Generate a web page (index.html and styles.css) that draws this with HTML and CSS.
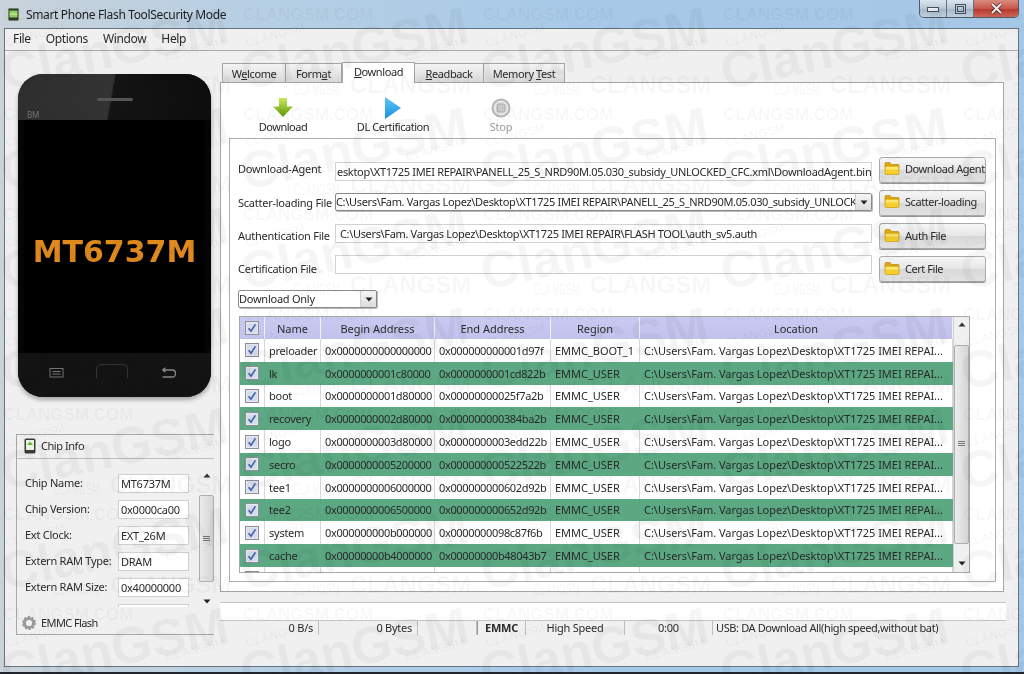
FILE: index.html
```html
<!DOCTYPE html>
<html lang="en">
<head>
<meta charset="utf-8">
<title>Smart Phone Flash Tool</title>
<link rel="stylesheet" href="styles.css">
</head>
<body>
<svg width="0" height="0" class="defs" aria-hidden="true">
  <defs>
    <symbol id="folder" viewBox="0 0 16 16">
      <path d="M1 3.5 Q1 2.5 2 2.5H6L7.5 4.5H14Q15 4.5 15 5.5V7H1Z" fill="#e0a810" stroke="#b98a10" stroke-width=".7"/>
      <rect x="1" y="6" width="14" height="8.5" rx="1" fill="#f7cf2c" stroke="#c69a12" stroke-width=".7"/>
      <rect x="2" y="7" width="12" height="2.5" fill="#fde774"/>
    </symbol>
    <symbol id="check" viewBox="0 0 14 14">
      <rect x=".5" y=".5" width="13" height="13" fill="#e6e9f2" stroke="#8e8f96"/>
      <rect x="2" y="2" width="10" height="10" fill="#d6dcec"/>
      <path d="M3.6 7.2 6 10.2 10.4 3.4" fill="none" stroke="#3d5fa8" stroke-width="1.6"/>
    </symbol>
    <symbol id="uparrow" viewBox="0 0 8 5"><path d="M4 .5 7.5 4.5H.5Z" fill="#333"/></symbol>
    <symbol id="downarrow" viewBox="0 0 8 5"><path d="M4 4.5 7.5 .5H.5Z" fill="#222"/></symbol>
  </defs>
</svg>

<div class="window">
  <header class="titlebar">
    <svg class="appicon" viewBox="0 0 11 13" width="11" height="13"><rect x=".5" y=".5" width="10" height="12" rx="1" fill="#2f3a2c" stroke="#77806f"/><rect x="1.5" y="2.5" width="8" height="7" fill="#8ccf5c"/><rect x="1.5" y="5.5" width="8" height="1" fill="#d6efb0"/></svg>
    <span class="apptitle">Smart Phone Flash ToolSecurity Mode</span>
    <div class="winbtns">
      <span class="winbtn"><svg viewBox="0 0 12 6" width="12" height="6"><rect x=".5" y="1.5" width="11" height="4" fill="#e8eef4" stroke="#44505c"/></svg></span>
      <span class="winbtn"><svg viewBox="0 0 11 10" width="11" height="10"><rect x=".5" y=".5" width="10" height="9" fill="none" stroke="#44505c"/><rect x="2.5" y="2.5" width="6" height="5" fill="none" stroke="#44505c"/></svg></span>
      <span class="winbtn winclose"><svg viewBox="0 0 13 11" width="13" height="11"><path d="M2 1 11 10M11 1 2 10" stroke="#3b2a2a" stroke-width="3.4"/><path d="M2 1 11 10M11 1 2 10" stroke="#f6eeee" stroke-width="2"/></svg></span>
    </div>
  </header>

  <div class="client">
    <nav class="menubar"><span>File</span><span>Options</span><span>Window</span><span>Help</span></nav>
    <div class="workspace">
      <aside class="leftcol">
        <div class="phone">
          <div class="phonetop"><i class="speaker"></i><span class="signal">BM</span></div>
          <div class="phonescreen">MT6737M</div>
          <div class="phonebottom">
            <svg viewBox="0 0 14 10" width="21" height="10"><rect x=".5" y=".5" width="13" height="8.5" fill="none" stroke="#777"/><path d="M3 3.5H11M3 6H11" stroke="#777"/></svg>
            <i class="homebtn"></i>
            <svg viewBox="0 0 20 12" width="21" height="12"><path d="M5 3H15Q18 3 18 6.5T15 10H5M5 3 8 .8M5 3 8 5.2" fill="none" stroke="#888" stroke-width="1.3"/></svg>
          </div>
        </div>
        <section class="chipbox">
          <div class="chiphead">
            <svg viewBox="0 0 12 16" width="12" height="16"><rect x=".5" y=".5" width="11" height="15" rx="1.5" fill="#3a3a3a"/><rect x="2" y="2" width="8" height="10" fill="#e8f5e0"/><path d="M3 7 6 3.5 9 7Z" fill="#6cb33e"/></svg>
            <span>Chip Info</span>
          </div>
          <div class="chipbody">
            <div class="chipfields">
              <div class="chipfield"><label>Chip Name:</label><span class="chipvalue">MT6737M</span></div>
              <div class="chipfield"><label>Chip Version:</label><span class="chipvalue">0x0000ca00</span></div>
              <div class="chipfield"><label>Ext Clock:</label><span class="chipvalue">EXT_26M</span></div>
              <div class="chipfield"><label>Extern RAM Type:</label><span class="chipvalue">DRAM</span></div>
              <div class="chipfield"><label>Extern RAM Size:</label><span class="chipvalue">0x40000000</span></div>
              <div class="chipfield"><label></label><span class="chipvalue"></span></div>
            </div>
            <div class="vscroll chipscroll">
              <svg class="arrow" width="8" height="5"><use href="#uparrow"/></svg>
              <div class="thumb chipthumb"><i class="grip"></i></div>
              <svg class="arrow" width="8" height="5"><use href="#downarrow"/></svg>
            </div>
          </div>
          <div class="chipfoot">
            <svg viewBox="0 0 14 14" width="14" height="14"><circle cx="7" cy="7" r="4.6" fill="none" stroke="#9a9a9a" stroke-width="3"/><circle cx="7" cy="7" r="6" fill="none" stroke="#9a9a9a" stroke-width="2" stroke-dasharray="2 1.77"/></svg>
            <span>EMMC Flash</span>
          </div>
        </section>
      </aside>

      <main class="rightcol">
        <div class="tabs">
          <span class="tab tab-welcome"><span>W<u>e</u>lcome</span></span>
          <span class="tab tab-format"><span>Form<u>a</u>t</span></span>
          <span class="tab tab-download active"><span><u>D</u>ownload</span></span>
          <span class="tab tab-readback"><span><u>R</u>eadback</span></span>
          <span class="tab tab-memory"><span>Memory <u>T</u>est</span></span>
        </div>
        <div class="pane">
          <div class="toolbar">
            <div class="tool tool-download">
              <svg viewBox="0 0 22 22" width="22" height="22"><defs><linearGradient id="ga" x1="0" y1="0" x2="0" y2="1"><stop offset="0" stop-color="#c8e85a"/><stop offset="1" stop-color="#5f9a0a"/></linearGradient></defs><path d="M7 1H15V9.500H21L11 20 1 9.500H7Z" fill="url(#ga)"/></svg>
              <span>Download</span>
            </div>
            <div class="tool tool-cert">
              <svg viewBox="0 0 18 22" width="18" height="22"><defs><linearGradient id="gb" x1="0" y1="0" x2="0" y2="1"><stop offset="0" stop-color="#5cc8f5"/><stop offset="1" stop-color="#1d8fe0"/></linearGradient></defs><path d="M1 0 17 11 1 22Z" fill="url(#gb)"/></svg>
              <span>DL Certification</span>
            </div>
            <div class="tool tool-stop">
              <svg viewBox="0 0 20 20" width="20" height="20"><circle cx="10" cy="10" r="8.500" fill="#e4e4e4" stroke="#b5b5b5" stroke-width="2"/><rect x="6" y="6" width="8" height="8" rx="1.500" fill="#c8c8c8" stroke="#a8a8a8"/></svg>
              <span>Stop</span>
            </div>
          </div>
          <div class="panel">
            <div class="formgrid">
              <label class="label-da">Download-Agent</label>
              <div class="field field-da">esktop\XT1725 IMEI REPAIR\PANELL_25_S_NRD90M.05.030_subsidy_UNLOCKED_CFC.xml\DownloadAgent.bin</div>
              <button class="btn btn-up2"><svg width="16" height="16"><use href="#folder"/></svg><span>Download Agent</span></button>

              <label>Scatter-loading File</label>
              <div class="combo combo-wide"><span class="combotext">C:\Users\Fam. Vargas Lopez\Desktop\XT1725 IMEI REPAIR\PANELL_25_S_NRD90M.05.030_subsidy_UNLOCK</span><i class="comboarrow"><svg width="8" height="5"><use href="#downarrow"/></svg></i></div>
              <button class="btn btn-up2"><svg width="16" height="16"><use href="#folder"/></svg><span>Scatter-loading</span></button>

              <label>Authentication File</label>
              <div class="field field-auth">C:\Users\Fam. Vargas Lopez\Desktop\XT1725 IMEI REPAIR\FLASH TOOL\auth_sv5.auth</div>
              <button class="btn"><svg width="16" height="16"><use href="#folder"/></svg><span>Auth File</span></button>

              <label>Certification File</label>
              <div class="field field-cert"></div>
              <button class="btn"><svg width="16" height="16"><use href="#folder"/></svg><span>Cert File</span></button>
            </div>
            <div class="combo combo-mode"><span class="combotext">Download Only</span><i class="comboarrow"><svg width="8" height="5"><use href="#downarrow"/></svg></i></div>
            <div class="tablewrap">
              <div class="tablebody">
                <div class="row head">
                  <span class="cell cbx"><svg width="14" height="14"><use href="#check"/></svg></span><span class="cell">Name</span><span class="cell">Begin Address</span><span class="cell">End Address</span><span class="cell">Region</span><span class="cell">Location</span>
                </div>
                <div class="row"><span class="cell cbx"><svg width="14" height="14"><use href="#check"/></svg></span><span class="cell">preloader</span><span class="cell">0x0000000000000000</span><span class="cell">0x000000000001d97f</span><span class="cell">EMMC_BOOT_1</span><span class="cell">C:\Users\Fam. Vargas Lopez\Desktop\XT1725 IMEI REPAI...</span></div>
                <div class="row green"><span class="cell cbx"><svg width="14" height="14"><use href="#check"/></svg></span><span class="cell">lk</span><span class="cell">0x0000000001c80000</span><span class="cell">0x0000000001cd822b</span><span class="cell">EMMC_USER</span><span class="cell">C:\Users\Fam. Vargas Lopez\Desktop\XT1725 IMEI REPAI...</span></div>
                <div class="row"><span class="cell cbx"><svg width="14" height="14"><use href="#check"/></svg></span><span class="cell">boot</span><span class="cell">0x0000000001d80000</span><span class="cell">0x00000000025f7a2b</span><span class="cell">EMMC_USER</span><span class="cell">C:\Users\Fam. Vargas Lopez\Desktop\XT1725 IMEI REPAI...</span></div>
                <div class="row green"><span class="cell cbx"><svg width="14" height="14"><use href="#check"/></svg></span><span class="cell">recovery</span><span class="cell">0x0000000002d80000</span><span class="cell">0x000000000384ba2b</span><span class="cell">EMMC_USER</span><span class="cell">C:\Users\Fam. Vargas Lopez\Desktop\XT1725 IMEI REPAI...</span></div>
                <div class="row"><span class="cell cbx"><svg width="14" height="14"><use href="#check"/></svg></span><span class="cell">logo</span><span class="cell">0x0000000003d80000</span><span class="cell">0x0000000003edd22b</span><span class="cell">EMMC_USER</span><span class="cell">C:\Users\Fam. Vargas Lopez\Desktop\XT1725 IMEI REPAI...</span></div>
                <div class="row green"><span class="cell cbx"><svg width="14" height="14"><use href="#check"/></svg></span><span class="cell">secro</span><span class="cell">0x0000000005200000</span><span class="cell">0x000000000522522b</span><span class="cell">EMMC_USER</span><span class="cell">C:\Users\Fam. Vargas Lopez\Desktop\XT1725 IMEI REPAI...</span></div>
                <div class="row"><span class="cell cbx"><svg width="14" height="14"><use href="#check"/></svg></span><span class="cell">tee1</span><span class="cell">0x0000000006000000</span><span class="cell">0x000000000602d92b</span><span class="cell">EMMC_USER</span><span class="cell">C:\Users\Fam. Vargas Lopez\Desktop\XT1725 IMEI REPAI...</span></div>
                <div class="row green"><span class="cell cbx"><svg width="14" height="14"><use href="#check"/></svg></span><span class="cell">tee2</span><span class="cell">0x0000000006500000</span><span class="cell">0x000000000652d92b</span><span class="cell">EMMC_USER</span><span class="cell">C:\Users\Fam. Vargas Lopez\Desktop\XT1725 IMEI REPAI...</span></div>
                <div class="row"><span class="cell cbx"><svg width="14" height="14"><use href="#check"/></svg></span><span class="cell">system</span><span class="cell">0x000000000b000000</span><span class="cell">0x0000000098c87f6b</span><span class="cell">EMMC_USER</span><span class="cell">C:\Users\Fam. Vargas Lopez\Desktop\XT1725 IMEI REPAI...</span></div>
                <div class="row green"><span class="cell cbx"><svg width="14" height="14"><use href="#check"/></svg></span><span class="cell">cache</span><span class="cell">0x00000000b4000000</span><span class="cell">0x00000000b48043b7</span><span class="cell">EMMC_USER</span><span class="cell">C:\Users\Fam. Vargas Lopez\Desktop\XT1725 IMEI REPAI...</span></div>
                <div class="row"><span class="cell cbx"><svg width="14" height="14"><use href="#check"/></svg></span><span class="cell"></span><span class="cell"></span><span class="cell"></span><span class="cell"></span><span class="cell"></span></div>
              </div>
              <div class="vscroll tablescroll">
                <svg class="arrow" width="8" height="5"><use href="#uparrow"/></svg>
                <div class="thumb tablethumb"><i class="grip"></i></div>
                <svg class="arrow" width="8" height="5"><use href="#downarrow"/></svg>
              </div>
            </div>
          </div>
        </div>
        <div class="progress"></div>
        <div class="status">
          <span class="st st1">0 B/s</span>
          <span class="st st2">0 Bytes</span>
          <span class="st st3"></span>
          <span class="st st4">EMMC</span>
          <span class="st st5">High Speed</span>
          <span class="st st6">0:00</span>
          <span class="st st7">USB: DA Download All(high speed,without bat)</span>
        </div>
      </main>
    </div>
  </div>
</div>

<svg class="watermark" width="1024" height="674" aria-hidden="true">
  <defs>
    <g id="wmtile">
      <text x="3" y="20" class="wm-url">CLANGSM.COM</text>
      <text x="7" y="47" class="wm-small" transform="rotate(-15 7 47)">CLANGSM</text>
      <text x="167" y="61" class="wm-small" transform="rotate(-15 167 61)">CLANGSM</text>
      <text class="wm-narrow" transform="translate(53 95) scale(.58 1)">CLANGSM</text>
      <text x="110" y="93" class="wm-wide">CLANGSM</text>
      <text x="5" y="90" class="wm-big" transform="rotate(-12 5 90)">ClanGSM</text>
    </g>
    <g id="wmrow">
      <use href="#wmtile" x="0"/><use href="#wmtile" x="240"/><use href="#wmtile" x="480"/><use href="#wmtile" x="720"/><use href="#wmtile" x="960"/>
    </g>
  </defs>
  <use href="#wmrow" y="0"/><use href="#wmrow" y="100"/><use href="#wmrow" y="200"/><use href="#wmrow" y="300"/><use href="#wmrow" y="400"/><use href="#wmrow" y="500"/><use href="#wmrow" y="600"/>
</svg>
</body>
</html>
```
FILE: styles.css
```css
* { box-sizing: border-box; }
html, body { margin: 0; padding: 0; }
body {
  width: 1024px; height: 674px; overflow: hidden; position: relative;
  font-family: "Noto Sans", "DejaVu Sans", sans-serif;
  font-size: 11px; letter-spacing: -.25px; color: #2a2a2a;
  background: #9dc3e2;
}
.defs { position: absolute; }
.window {
  height: 674px; display: flex; flex-direction: column;
  background: linear-gradient(90deg, #c9d3da 0, #b6cfe4 25%, #a6c9e8 60%, #a5c8e6 100%);
  border-bottom: 2px solid #20262c;
  filter: blur(.35px);
}
.titlebar { height: 28px; flex: none; display: flex; align-items: flex-start; padding: 8px 0 0 8px; position: relative; }
.appicon { flex: none; }
.apptitle { margin-left: 7px; font-size: 12px; letter-spacing: -.35px; line-height: 13px; color: #1c1c1c; }
.winbtns { position: absolute; top: 0; left: 919px; width: 100px; height: 18px; display: flex; border: 1px solid #4f5c68; border-top: 0; border-radius: 0 0 5px 5px; overflow: hidden; }
.winbtn { width: 27px; display: flex; align-items: center; justify-content: center; background: linear-gradient(#dbe5ee, #b9c8d6 50%, #a3b5c6 51%, #bfd0de); border-right: 1px solid #67747f; }
.winclose { flex: 1; border: 0; background: linear-gradient(#d98b80, #c9564a 50%, #b8352a 51%, #d0665a); }

.client { flex: 1; margin: 0 5px 5px 4px; border: 1px solid #66747f; background: #f0f0f0; display: flex; flex-direction: column; min-height: 0; }
.menubar { height: 22px; flex: none; display: flex; border-bottom: 1px solid #a9a9a9; padding: 1px 0 0 8px; font-size: 12px; letter-spacing: -.35px; line-height: 18px; }
.menubar span { margin-right: 15px; }
.workspace { flex: 1; display: flex; min-height: 0; }

.leftcol { width: 215px; flex: none; display: flex; flex-direction: column; }
.phone { margin: 23px 0 0 13px; width: 193px; height: 323px; flex: none; border-radius: 25px; overflow: hidden; background: #050505; display: flex; flex-direction: column; box-shadow: 0 3px 4px rgba(0,0,0,.3); }
.phonetop { height: 46px; position: relative; background: linear-gradient(100deg, #2e2e2e 0, #333 48%, #141414 49%, #0d0d0d 100%); flex: none; }
.speaker { position: absolute; left: 79px; top: 24px; width: 36px; height: 3px; border-radius: 2px; background: #555; }
.signal { position: absolute; left: 9px; top: 36px; font-size: 8px; line-height: 9px; color: #777; }
.phonescreen { flex: 1; margin: 0 6px; background: #000; color: #e08a1e; font: bold 30px/24px "DejaVu Sans", sans-serif; letter-spacing: 0; display: flex; align-items: center; justify-content: center; padding-top: 31px; }
.phonebottom { height: 44px; flex: none; background: #131313; display: flex; align-items: center; justify-content: space-between; padding: 0 33px 4px 28px; }
.homebtn { width: 32px; height: 14px; border: 1px solid #333; border-bottom: 0; border-radius: 5px 5px 0 0; margin-bottom: 4px; }

.chipbox { margin: 37px 0 0 11px; width: 198px; height: 201px; flex: none; border: 1px solid #a8a8a8; border-right: 0; display: flex; flex-direction: column; }
.chiphead { height: 24px; flex: none; border-bottom: 1px solid #bdbdbd; display: flex; align-items: center; gap: 5px; padding: 0 0 2px 7px; letter-spacing: -.45px; }
.chipbody { height: 148px; flex: none; display: flex; overflow: hidden; }
.chipfields { width: 182px; flex: none; padding: 15px 0 0 8px; display: flex; flex-direction: column; gap: 7px; }
.chipfield { display: flex; align-items: center; height: 19px; flex: none; }
.chipfield label { width: 93px; flex: none; position: relative; top: -1px; white-space: nowrap; }
.chipvalue { width: 71px; height: 19px; flex: none; background: #fff; border: 1px solid #d0d0d0; padding-left: 2px; line-height: 18px; overflow: hidden; white-space: nowrap; }
.chipfoot { flex: 1; display: flex; align-items: center; gap: 5px; padding: 4px 0 0 5px; letter-spacing: -.6px; }

.vscroll { display: flex; flex-direction: column; align-items: center; justify-content: space-between; background: #f0f0f0; }
.arrow { flex: none; }
.thumb { width: 100%; border: 1px solid #aeaeae; border-radius: 2px; background: linear-gradient(90deg, #ececec, #d5d5d5); position: relative; display: flex; align-items: center; justify-content: center; }
.grip { width: 7px; height: 6px; background: repeating-linear-gradient(#777 0 1px, transparent 1px 2px); }
.chipscroll { width: 15px; margin-top: 12px; padding: 2px 0 3px; }
.chipthumb { height: 87px; }

.rightcol { flex: 1; display: flex; flex-direction: column; padding: 10px 12px 0 0; min-width: 0; }
.tabs { height: 21px; display: flex; align-items: flex-end; padding-left: 2px; flex: none; letter-spacing: -.4px; }
.tab { height: 19px; border: 1px solid #a5a5a5; border-bottom: 0; background: linear-gradient(#f4f4f4, #d8d8d8); display: flex; align-items: center; justify-content: center; white-space: nowrap; }
.tab-welcome { width: 64px; }
.tab-format { width: 56px; border-left: 0; }
.tab-download { width: 73px; }
.tab-readback { width: 69px; border-left: 0; }
.tab-memory { width: 81px; border-left: 0; }
.tab.active { height: 21px; background: #fff; position: relative; top: 1px; padding-bottom: 3px; }
.pane { width: 784px; height: 510px; flex: none; background: #fff; border: 1px solid #a5a5a5; display: flex; flex-direction: column; }
.toolbar { height: 55px; flex: none; display: flex; align-items: flex-start; }
.tool { display: flex; flex-direction: column; align-items: center; padding-top: 14px; gap: 1px; line-height: 14px; letter-spacing: -.45px; }
.tool svg { flex: none; }
.tool-download { width: 100px; margin-left: 12px; }
.tool-cert { width: 100px; margin-left: 10px; }
.tool-stop { width: 60px; margin-left: 28px; color: #999; padding-top: 15px; gap: 2px; letter-spacing: -.25px; }
.panel { margin: 0 7px 9px 8px; flex: 1; border: 1px solid #adadad; padding: 18px 0 0 8px; display: flex; flex-direction: column; min-height: 0; }
.formgrid { display: grid; grid-template-columns: 97px 537px 114px; grid-auto-rows: 26px; row-gap: 7px; align-items: center; }
.formgrid label { white-space: nowrap; position: relative; top: -1px; }
.formgrid .label-da { top: -2px; }
.field { height: 19px; border: 1px solid #d2d2d2; background: #fff; padding-left: 1px; line-height: 18px; white-space: nowrap; overflow: hidden; position: relative; }
.field-da { top: 1px; letter-spacing: -.3px; }
.field-auth { padding-left: 4px; top: -3px; letter-spacing: -.34px; }
.field-cert { top: -5px; }
.combo { height: 18px; border: 1px solid #8a8a8a; border-radius: 2px; display: flex; background: #fff; line-height: 16px; overflow: hidden; box-shadow: 1px 1px 0 #bbb; }
.combotext { flex: 1; white-space: nowrap; overflow: hidden; }
.comboarrow { width: 16px; flex: none; background: linear-gradient(#f6f6f6, #dcdcdc); border-left: 1px solid #cfcfcf; display: flex; align-items: center; justify-content: center; }
.combo-wide { position: relative; top: -1px; letter-spacing: -.33px; }
.combo-mode { width: 139px; margin-top: 8px; flex: none; }
.btn { margin-left: 7px; width: 107px; height: 26px; padding: 0 0 2px 4px; font: inherit; letter-spacing: -.45px; color: inherit; text-align: left; border: 1px solid #a9a9a9; border-radius: 3px; background: linear-gradient(#f6f6f6, #e6e6e6 50%, #d8d8d8 51%, #e2e2e2); display: flex; align-items: center; gap: 5px; box-shadow: 0 1px 0 #999; white-space: nowrap; }
.btn-up2 { padding-bottom: 4px; }
.btn svg { flex: none; }
.tablewrap { margin: 8px 0 0 1px; width: 731px; height: 257px; flex: none; border: 1px solid #a9a9a9; display: flex; overflow: hidden; background: #fff; }
.tablebody { width: 713px; flex: none; }
.row { display: grid; grid-template-columns: 25px 56px 114px 116px 89px 313px; height: 22.8px; align-items: center; white-space: nowrap; }
.row.head { height: 22px; background: linear-gradient(#c9c9f2, #c2c2ec); }
.green { background: #5ba883; }
.cell { padding-left: 4px; display: flex; align-items: center; height: 100%; overflow: hidden; border-right: 1px solid #d8d8d8; }
.cell:nth-child(3), .cell:nth-child(4) { letter-spacing: -.35px; }
.cell:nth-child(5) { letter-spacing: -.02px; }
.cell:nth-child(6) { letter-spacing: -.03px; }
.head .cell, .head .cell:nth-child(n) { justify-content: center; border-right: 1px solid #f2f2fa; padding-left: 0; letter-spacing: 0; }
.green .cell { border-right-color: #5ba883; }
.cell.cbx { padding: 0; justify-content: center; }
.tablescroll { width: 16px; padding: 5px 0 6px; border-left: 1px solid #d0d0d0; }
.tablethumb { height: 199px; }

.progress { height: 18px; margin-top: 10px; flex: none; background: #fff; border-top: 1px solid #c4c4c4; }
.status { height: 15px; flex: none; display: flex; border-top: 1px solid #c4c4c4; line-height: 14px; }
.st { border-right: 1px solid #bdbdbd; padding: 0 3px; white-space: nowrap; }
.st1 { width: 99px; text-align: right; padding-right: 5px; }
.st2 { width: 99px; text-align: right; padding-right: 5px; }
.st3 { width: 59px; }
.st4 { width: 49px; text-align: center; font-weight: bold; border-left: 1px solid #999; }
.st5 { width: 99px; text-align: center; }
.st6 { width: 88px; text-align: center; }
.st7 { flex: 1; border-right: 0; letter-spacing: -.38px; }

.watermark { position: absolute; left: 0; top: 0; pointer-events: none; }
.watermark text { fill: rgba(0,0,0,.04); font-family: "Liberation Sans", sans-serif; font-weight: bold; letter-spacing: 0; }
.wm-url { font-size: 17px; }
.wm-small { font-size: 12px; }
.wm-narrow { font-size: 16px; }
.wm-wide { font-size: 24px; }
.wm-big { font-size: 52px; }
```
